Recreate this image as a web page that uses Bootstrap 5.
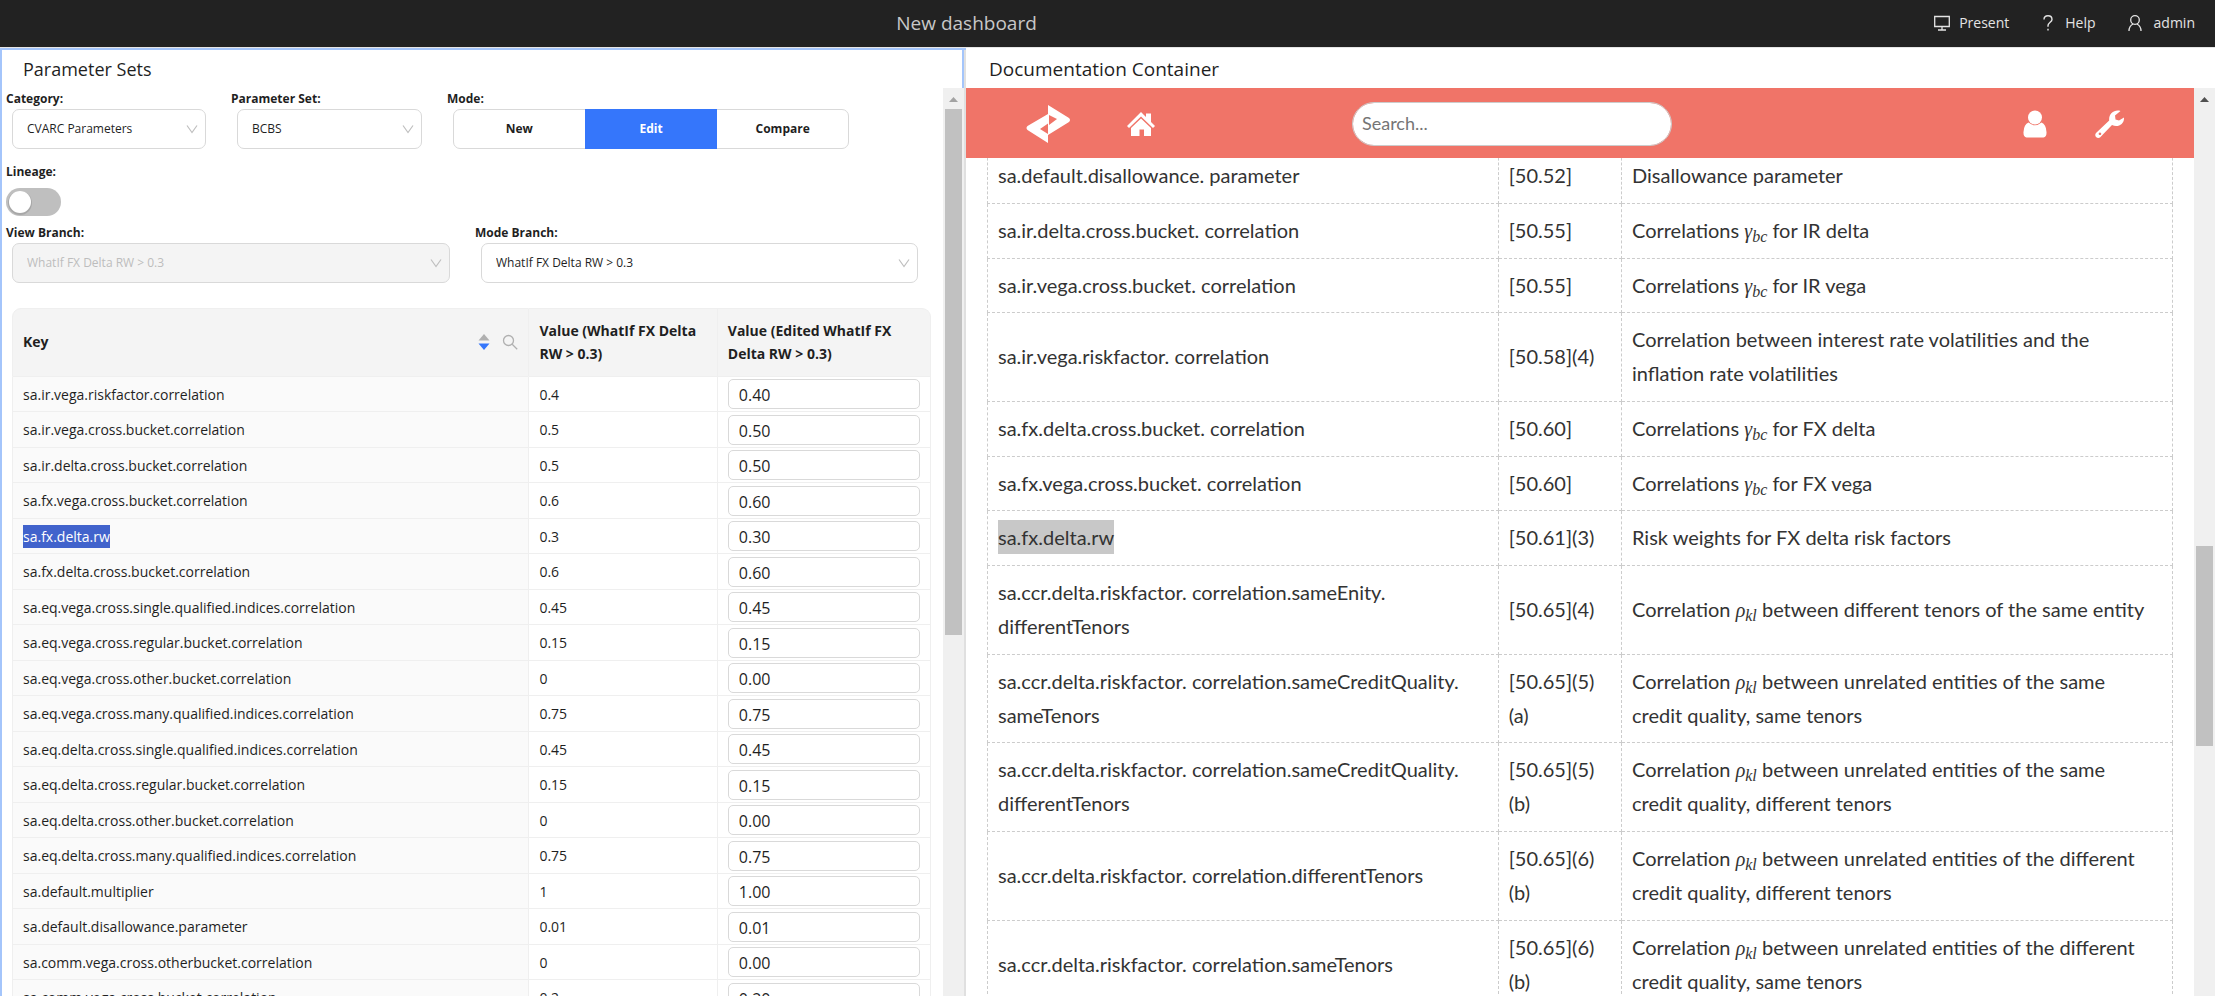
<!DOCTYPE html>
<html lang="en">
<head>
<meta charset="utf-8">
<meta name="viewport" content="width=device-width, initial-scale=1">
<title>New dashboard</title>
<link href="https://cdn.jsdelivr.net/npm/bootstrap@5.3.0/dist/css/bootstrap.min.css" rel="stylesheet">
<style>
  :root { --ink: #1f1f1f; --line: #d9d9d9; --soft: #efefef; --accent: #3576fb; --coral: #f07468; }
  body { font-family: "Open Sans", "Noto Sans", sans-serif; font-size: 14px; color: var(--ink); background: #fff; }

  /* top bar */
  .topbar { height: 48px; background: #222; border-bottom: 1px solid #e6e6e6; color: #c8c8c8; padding-bottom: 2px; }
  .topbar h1 { font-size: 19px; font-weight: 400; line-height: 24px; }
  .topbar a { color: #e4e4e4; font-size: 14px; line-height: 24px; }
  .topmenu { padding-right: 20px; gap: 32px; }

  /* panes */
  .panes { display: grid; grid-template-columns: minmax(0, 966fr) minmax(0, 1249fr); }
  .params { border: 2px solid #a4c5fb; border-width: 2px 0 0 2px; }
  .params .pane-title { border-right: 2px solid #a4c5fb; padding: 1px 0 0 21px; height: 38px; }
  .divider { border-right: 2px solid #e0e0e0; }
  .pane-title { font-size: 18px; font-weight: 400; height: 40px; padding: 2px 0 0 23px; }
  .docs .pane-title { font-size: 19px; }

  /* scroll bars */
  .rail { flex: 0 0 21px; background: #f0f0f0; }
  .rail svg { display: block; width: 21px; height: 21px; flex: none; }
  .rail-thumb { background: #c1c1c1; margin: 0 2px; }

  /* parameter form */
  .form-area { padding: 2px 0 0 4px; }
  .row-three { display: grid; grid-template-columns: 225fr 216fr 427fr 69fr; }
  .row-two { display: grid; grid-template-columns: 469fr 468fr; }
  .field { padding-right: 25px; }
  .field-label { display: block; font-size: 12px; font-weight: 700; line-height: 17px; margin-bottom: 2px; }
  .picker { width: auto; margin-left: 6px; }
  .picker .form-select, .mode-group { height: 40px; }
  .picker .form-select { font-size: 12px; line-height: 24px; color: var(--ink); padding: 0 32px 0 14px; border: 1px solid var(--line); border-radius: 7px;
    background-image: url("data:image/svg+xml,%3Csvg xmlns='http://www.w3.org/2000/svg' viewBox='0 0 12 12'%3E%3Cpath d='M1 2.5 6 9.500 11 2.500' fill='none' stroke='%23bfbfbf' stroke-width='1.200'/%3E%3C/svg%3E");
    background-size: 12px 12px; background-position: right 7px center; }
  .picker .form-select:disabled { background-color: #f4f4f4; color: #bdbdbd; opacity: 1; }
  .mode-group { margin-left: 6px; }
  .mode-group .btn { flex: 1 1 0; font-size: 12px; font-weight: 700; color: var(--ink); border: 1px solid var(--line); border-radius: 7px; padding: 0; }
  .mode-group .btn.active { background: var(--accent); border-color: var(--accent); color: #fff; }
  .lineage-switch { padding: 0; min-height: 0; margin: 14px 0 8px; line-height: 1; }
  .lineage-switch .field-label { margin-bottom: 8px; }
  .lineage-switch .form-check-input { float: none; display: block; margin: 0; width: 55px; height: 28px; border: 0; background-color: #bfbfbf;
    background-image: url("data:image/svg+xml,%3Csvg xmlns='http://www.w3.org/2000/svg' viewBox='0 0 28 28'%3E%3Ccircle cx='14' cy='15' r='12' fill='%23000' fill-opacity='.12'/%3E%3Ccircle cx='14' cy='14' r='11' fill='%23fff'/%3E%3C/svg%3E"); background-size: 28px 28px; background-position: left center; }

  /* parameter table */
  .grid-area { margin: 25px 12px 0 6px; }
  .key-table { table-layout: fixed; width: 100%; border-collapse: separate; border-spacing: 0; }
  .key-table th { height: 69px; background: #f4f4f4; font-weight: 700; line-height: 23px; padding: 0 10px 2px; vertical-align: middle;
    border-top: 1px solid var(--soft); border-bottom: 1px solid var(--soft); border-right: 1px solid var(--soft); }
  .key-table th:first-child { border-top-left-radius: 9px; border-left: 1px solid var(--soft); }
  .key-table th:last-child { border-top-right-radius: 9px; }
  .key-table td { height: 35px; padding: 0 10px; line-height: 23px; vertical-align: middle; border-bottom: 1px solid var(--soft); border-right: 1px solid var(--soft); }
  .key-table tr:nth-child(even) td { height: 36px; }
  .key-table td:first-child { background: #fafafa; border-left: 1px solid var(--soft); }
  .key-table .form-control { height: 30px; padding: 2px 10px 0; font-size: 16px; line-height: 26px; color: var(--ink); border: 1px solid var(--line); border-radius: 5px; }
  .picked { background: #4163cc; color: #fff; }
  .icon-btn { border: 0; background: none; padding: 0; line-height: 1; }

  /* documentation */
  .docs, .docs-head .form-control { font-family: Lato, "Open Sans", sans-serif; }
  .docs .pane-title { font-family: "Open Sans", "Noto Sans", sans-serif; }
  .docs-head { height: 70px; background: var(--coral); position: relative; z-index: 1; padding: 2px 69px 0 60px; }
  .docs-head .form-control { width: 320px; height: 44px; border-radius: 22px; border: 1px solid #ccc; padding: 0 9px 3px; font-size: 18px; }
  .docs-head .form-control::placeholder { color: #757575; }
  .head-start { flex: 326 1 0; }
  .head-end { flex: 453 1 0; }
  .doc-scroll { margin-top: -10px; padding: 0 21px; }
  .doc-table { table-layout: fixed; width: 100%; border-collapse: collapse; font-size: 20px; line-height: 34px; color: #333; }
  .doc-table td { padding: 9px 10px 11px; border: 1px dashed #ccc; vertical-align: middle; }
  .doc-table td:last-child { padding-right: 20px; }
  .doc-table tr:nth-child(3n) td { padding-bottom: 10px; }
  .doc-table i { font-family: "Liberation Serif", serif; line-height: 0; }
  .doc-table sub { font-family: "Liberation Serif", serif; font-style: italic; font-size: 16px; line-height: 0; }
  .found { background: #c8c8c8; display: inline-block; }
</style>
</head>
<body>
<div class="d-flex flex-column vh-100 overflow-hidden">

  <header class="topbar d-flex align-items-center flex-shrink-0">
    <h1 class="flex-grow-1 text-center m-0">New dashboard</h1>
    <nav class="topmenu d-flex align-items-center">
      <a href="#" class="d-flex align-items-center text-decoration-none gap-2">
        <svg width="18" height="18" viewBox="0 0 18 18" fill="none" stroke="currentColor" stroke-width="1.3"><path d="M1.700 2.500h14.600v10H1.700zM9 12.500v3M5 16h8"/></svg>Present</a>
      <a href="#" class="d-flex align-items-center text-decoration-none gap-2">
        <svg width="16" height="18" viewBox="0 0 16 18" fill="none" stroke="currentColor" stroke-width="1.4"><path d="M3 5.500C3 3 4.800 1.700 7 1.700s4 1.400 4 3.700c0 2.700-4 3.200-4 6.400v1M7 14.800v1.800"/></svg>Help</a>
      <a href="#" class="d-flex align-items-center text-decoration-none gap-2">
        <svg width="18" height="18" viewBox="0 0 18 18" fill="none" stroke="currentColor" stroke-width="1.3"><circle cx="7" cy="6" r="4.300"/><path d="M1 17c0-4 2-6 4.200-7M13 17c0-4-2-6-4.200-7"/></svg>admin</a>
    </nav>
  </header>

  <main class="panes flex-grow-1 overflow-hidden">

    <section class="params d-flex flex-column overflow-hidden">
      <div class="divider">
        <h2 class="pane-title d-flex align-items-center m-0">Parameter Sets</h2>
      </div>
      <div class="divider d-flex flex-grow-1 overflow-hidden">
        <div class="form-area flex-grow-1 overflow-hidden">
          <div class="row-three">
            <div class="field">
              <label class="field-label" for="category">Category:</label>
              <div class="picker"><select id="category" class="form-select"><option>CVARC Parameters</option></select></div>
            </div>
            <div class="field">
              <label class="field-label" for="paramset">Parameter Set:</label>
              <div class="picker"><select id="paramset" class="form-select"><option>BCBS</option></select></div>
            </div>
            <div class="field">
              <span class="field-label" id="mode-label">Mode:</span>
              <div class="mode-group btn-group d-flex" role="group" aria-labelledby="mode-label">
                <button type="button" class="btn">New</button>
                <button type="button" class="btn active">Edit</button>
                <button type="button" class="btn">Compare</button>
              </div>
            </div>
          </div>

          <div class="form-check form-switch lineage-switch">
            <label class="field-label" for="lineage">Lineage:</label>
            <input class="form-check-input" type="checkbox" role="switch" id="lineage">
          </div>

          <div class="row-two">
            <div class="field">
              <label class="field-label" for="viewbranch">View Branch:</label>
              <div class="picker"><select id="viewbranch" class="form-select" disabled><option>WhatIf FX Delta RW &gt; 0.3</option></select></div>
            </div>
            <div class="field">
              <label class="field-label" for="modebranch">Mode Branch:</label>
              <div class="picker"><select id="modebranch" class="form-select"><option>WhatIf FX Delta RW &gt; 0.3</option></select></div>
            </div>
          </div>

          <div class="grid-area">
            <table class="key-table">
              <colgroup><col style="width:56.3%"><col style="width:20.5%"><col style="width:23.2%"></colgroup>
              <thead>
                <tr>
                  <th scope="col">
                    <div class="d-flex align-items-center">
                      <span class="flex-grow-1">Key</span>
                      <button type="button" class="icon-btn me-2" aria-label="Sort"><svg width="12" height="18" viewBox="0 0 12 18"><path d="M.5 7.500 6 1l5.500 6.500z" fill="#b0b0b0"/><path d="M.5 10.500h11L6 17z" fill="#3576fb"/></svg></button>
                      <button type="button" class="icon-btn ms-1" aria-label="Filter"><svg width="16" height="16" viewBox="0 0 16 16" fill="none" stroke="#b0b0b0" stroke-width="1.300"><circle cx="6.500" cy="6.500" r="5"/><path d="m10.200 10.200 5 5"/></svg></button>
                    </div>
                  </th>
                  <th scope="col">Value (WhatIf FX Delta RW &gt; 0.3)</th>
                  <th scope="col">Value (Edited WhatIf FX Delta RW &gt; 0.3)</th>
                </tr>
              </thead>
              <tbody>
                <tr><td>sa.ir.vega.riskfactor.correlation</td><td>0.4</td><td><input class="form-control" aria-label="Edited value" value="0.40"></td></tr>
                <tr><td>sa.ir.vega.cross.bucket.correlation</td><td>0.5</td><td><input class="form-control" aria-label="Edited value" value="0.50"></td></tr>
                <tr><td>sa.ir.delta.cross.bucket.correlation</td><td>0.5</td><td><input class="form-control" aria-label="Edited value" value="0.50"></td></tr>
                <tr><td>sa.fx.vega.cross.bucket.correlation</td><td>0.6</td><td><input class="form-control" aria-label="Edited value" value="0.60"></td></tr>
                <tr><td><span class="picked d-inline-block">sa.fx.delta.rw</span></td><td>0.3</td><td><input class="form-control" aria-label="Edited value" value="0.30"></td></tr>
                <tr><td>sa.fx.delta.cross.bucket.correlation</td><td>0.6</td><td><input class="form-control" aria-label="Edited value" value="0.60"></td></tr>
                <tr><td>sa.eq.vega.cross.single.qualified.indices.correlation</td><td>0.45</td><td><input class="form-control" aria-label="Edited value" value="0.45"></td></tr>
                <tr><td>sa.eq.vega.cross.regular.bucket.correlation</td><td>0.15</td><td><input class="form-control" aria-label="Edited value" value="0.15"></td></tr>
                <tr><td>sa.eq.vega.cross.other.bucket.correlation</td><td>0</td><td><input class="form-control" aria-label="Edited value" value="0.00"></td></tr>
                <tr><td>sa.eq.vega.cross.many.qualified.indices.correlation</td><td>0.75</td><td><input class="form-control" aria-label="Edited value" value="0.75"></td></tr>
                <tr><td>sa.eq.delta.cross.single.qualified.indices.correlation</td><td>0.45</td><td><input class="form-control" aria-label="Edited value" value="0.45"></td></tr>
                <tr><td>sa.eq.delta.cross.regular.bucket.correlation</td><td>0.15</td><td><input class="form-control" aria-label="Edited value" value="0.15"></td></tr>
                <tr><td>sa.eq.delta.cross.other.bucket.correlation</td><td>0</td><td><input class="form-control" aria-label="Edited value" value="0.00"></td></tr>
                <tr><td>sa.eq.delta.cross.many.qualified.indices.correlation</td><td>0.75</td><td><input class="form-control" aria-label="Edited value" value="0.75"></td></tr>
                <tr><td>sa.default.multiplier</td><td>1</td><td><input class="form-control" aria-label="Edited value" value="1.00"></td></tr>
                <tr><td>sa.default.disallowance.parameter</td><td>0.01</td><td><input class="form-control" aria-label="Edited value" value="0.01"></td></tr>
                <tr><td>sa.comm.vega.cross.otherbucket.correlation</td><td>0</td><td><input class="form-control" aria-label="Edited value" value="0.00"></td></tr>
                <tr><td>sa.comm.vega.cross.bucket.correlation</td><td>0.2</td><td><input class="form-control" aria-label="Edited value" value="0.20"></td></tr>
              </tbody>
            </table>
          </div>
        </div>
        <div class="rail d-flex flex-column" aria-hidden="true">
          <svg viewBox="0 0 21 21"><path d="M6 14h9l-4.500-5z" fill="#a3a3a3"/></svg>
          <div class="rail-thumb" style="flex:526 1 0"></div>
          <div style="flex:361 1 0"></div>
        </div>
      </div>
    </section>

    <section class="docs d-flex flex-column overflow-hidden">
      <h2 class="pane-title d-flex align-items-center m-0 flex-shrink-0">Documentation Container</h2>
      <div class="d-flex flex-grow-1 overflow-hidden">
        <div class="flex-grow-1 overflow-hidden">
          <div class="docs-head d-flex align-items-center">
            <div class="head-start d-flex align-items-center">
              <a href="#" aria-label="Logo" class="me-5"><svg class="d-block" width="45" height="40" viewBox="0 0 45 40" fill="#fff"><path fill-rule="evenodd" d="M22 1 43 14q2 2 0 4L22 31V39L1.500 26q-2-2 0-4L22 10zM23 11v10l8-6zM22 19.500 14 25l8 5z"/></svg></a>
              <a href="#" aria-label="Home" class="ms-2"><svg class="d-block" width="28" height="26" viewBox="0 0 28 26" fill="#fff"><path d="M14 1 19 6V2.500h5V11l4 4-2 2L14 5.500 2 17l-2-2z"/><path d="m14 7.500 10 9.500v8h-7v-6.500h-4.500V25H4v-8z"/></svg></a>
            </div>
            <input class="form-control" type="search" placeholder="Search..." aria-label="Search">
            <div class="head-end d-flex align-items-center justify-content-end">
              <a href="#" aria-label="Account" class="me-5"><svg class="d-block" width="24" height="28" viewBox="0 0 24 28" fill="#fff"><ellipse cx="12" cy="7.500" rx="7" ry="7"/><path d="M5.500 12.500Q12 18 18.500 12.500 23 14 23.500 22q.3 5-3 5.500h-17Q.2 27 .5 22 1 14 5.500 12.500z"/></svg></a>
              <a href="#" aria-label="Settings"><svg class="d-block" width="30" height="28" viewBox="0 0 30 28" fill="#fff"><path fill-rule="evenodd" d="M25.500 1C19 -.8 13.500 4 14.200 10.500L1 23q-1.500 2 0 4 2 1.500 4 .5L17 15c6 3 12.500-1 12-7.500l-5 3-3.500-1-.5-4zM5 22.500a1.300 1.300 0 1 1-.1 0z"/></svg></a>
            </div>
          </div>
          <div class="doc-scroll">
            <table class="doc-table">
              <colgroup><col style="width:43.1%"><col style="width:10.4%"><col style="width:46.5%"></colgroup>
              <tbody>
                <tr><td>sa.default.disallowance. parameter</td><td>[50.52]</td><td>Disallowance parameter</td></tr>
                <tr><td>sa.ir.delta.cross.bucket. correlation</td><td>[50.55]</td><td>Correlations <i>γ</i><sub>bc</sub> for IR delta</td></tr>
                <tr><td>sa.ir.vega.cross.bucket. correlation</td><td>[50.55]</td><td>Correlations <i>γ</i><sub>bc</sub> for IR vega</td></tr>
                <tr><td>sa.ir.vega.riskfactor. correlation</td><td>[50.58](4)</td><td>Correlation between interest rate volatilities and the inflation rate volatilities</td></tr>
                <tr><td>sa.fx.delta.cross.bucket. correlation</td><td>[50.60]</td><td>Correlations <i>γ</i><sub>bc</sub> for FX delta</td></tr>
                <tr><td>sa.fx.vega.cross.bucket. correlation</td><td>[50.60]</td><td>Correlations <i>γ</i><sub>bc</sub> for FX vega</td></tr>
                <tr><td><span class="found">sa.fx.delta.rw</span></td><td>[50.61](3)</td><td>Risk weights for FX delta risk factors</td></tr>
                <tr><td>sa.ccr.delta.riskfactor. correlation.sameEnity.<wbr>differentTenors</td><td>[50.65](4)</td><td>Correlation <i>ρ</i><sub>kl</sub> between different tenors of the same entity</td></tr>
                <tr><td>sa.ccr.delta.riskfactor. correlation.sameCreditQuality.<wbr>sameTenors</td><td>[50.65](5)<wbr>(a)</td><td>Correlation <i>ρ</i><sub>kl</sub> between unrelated entities of the same credit quality, same tenors</td></tr>
                <tr><td>sa.ccr.delta.riskfactor. correlation.sameCreditQuality.<wbr>differentTenors</td><td>[50.65](5)<wbr>(b)</td><td>Correlation <i>ρ</i><sub>kl</sub> between unrelated entities of the same credit quality, different tenors</td></tr>
                <tr><td>sa.ccr.delta.riskfactor. correlation.differentTenors</td><td>[50.65](6)<wbr>(b)</td><td>Correlation <i>ρ</i><sub>kl</sub> between unrelated entities of the different credit quality, different tenors</td></tr>
                <tr><td>sa.ccr.delta.riskfactor. correlation.sameTenors</td><td>[50.65](6)<wbr>(b)</td><td>Correlation <i>ρ</i><sub>kl</sub> between unrelated entities of the different credit quality, same tenors</td></tr>
              </tbody>
            </table>
          </div>
        </div>
        <div class="rail d-flex flex-column" aria-hidden="true">
          <svg viewBox="0 0 21 21"><path d="M6 14h9l-4.500-5z" fill="#505050"/></svg>
          <div style="flex:437 1 0"></div>
          <div class="rail-thumb" style="flex:200 1 0"></div>
          <div style="flex:250 1 0"></div>
        </div>
      </div>
    </section>
  </main>
</div>
<script src="https://cdn.jsdelivr.net/npm/bootstrap@5.3.0/dist/js/bootstrap.bundle.min.js"></script>
</body>
</html>
